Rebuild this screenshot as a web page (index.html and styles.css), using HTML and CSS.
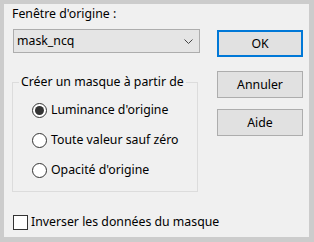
FILE: index.html
```html
<!DOCTYPE html>
<html lang="fr">
<head>
<meta charset="utf-8">
<link rel="stylesheet" href="styles.css">
</head>
<body>
<div class="dialog">
  <div class="main">
    <div class="left">
      <div class="label">Fenêtre d'origine :</div>
      <div class="select">
        <span>mask_ncq</span>
        <svg class="chev" width="9" height="5" viewBox="0 0 9 5"><polyline points="0.5,0.5 4.5,4.5 8.5,0.5" fill="none" stroke="#444" stroke-width="1"/></svg>
      </div>
      <fieldset class="group">
        <legend>Créer un masque à partir de</legend>
        <div class="radio-row"><span class="radio checked"></span><span>Luminance d'origine</span></div>
        <div class="radio-row"><span class="radio"></span><span>Toute valeur sauf zéro</span></div>
        <div class="radio-row"><span class="radio"></span><span>Opacité d'origine</span></div>
      </fieldset>
    </div>
    <div class="right">
      <div class="btn default">OK</div>
      <div class="btn cancel">Annuler</div>
      <div class="btn help">Aide</div>
    </div>
  </div>
  <div class="check-row"><span class="checkbox"></span><span>Inverser les données du masque</span></div>
</div>
</body>
</html>
```
FILE: styles.css
```css
html, body {
  margin: 0;
  padding: 0;
}
body {
  font-family: "Noto Sans", "Open Sans", sans-serif;
  font-size: 12.3px;
  line-height: 16px;
  color: #000;
}
.dialog {
  box-sizing: border-box;
  width: 314px;
  height: 242px;
  background: #f0f0f0;
  border-style: solid;
  border-color: #cccccc;
  border-width: 4px 5px 5px 4px;
  padding: 2px 6px 0 8px;
}
.main {
  display: flex;
  gap: 17px;
}
.left {
  width: 188px;
}
.label {
  height: 16px;
  white-space: nowrap;
}
.select {
  box-sizing: border-box;
  margin: 7px 0 0 1px;
  width: 187px;
  height: 24px;
  background: #e5e5e5;
  border: 1px solid #adadad;
  display: flex;
  align-items: center;
  justify-content: space-between;
  padding: 0 6px 0 3px;
}
.chev {
  display: block;
}
.group {
  box-sizing: border-box;
  width: 186px;
  height: 118px;
  margin: 21px 0 0 0;
  border: 1px solid #dcdcdc;
  padding: 5px 4px 6px 6px;
}
.group legend {
  padding: 0 2px;
  margin: 0;
  line-height: 16px;
  white-space: nowrap;
}
.radio-row {
  height: 30px;
  display: flex;
  align-items: center;
  gap: 4px;
  padding-left: 13px;
  white-space: nowrap;
}
.radio {
  box-sizing: border-box;
  width: 15px;
  height: 15px;
  border-radius: 50%;
  border: 1px solid #333;
  background: #fff;
  display: flex;
  align-items: center;
  justify-content: center;
  flex: none;
}
.radio.checked::after {
  content: "";
  width: 9px;
  height: 9px;
  border-radius: 50%;
  background: #333;
}
.right {
  display: flex;
  flex-direction: column;
  padding-top: 24px;
}
.btn {
  box-sizing: border-box;
  width: 86px;
  height: 27px;
  background: #e1e1e1;
  border: 1px solid #adadad;
  display: flex;
  align-items: center;
  justify-content: center;
}
.btn.default {
  border: 2px solid #0078d7;
}
.btn.cancel {
  margin-top: 14px;
}
.btn.help {
  margin-top: 11px;
}
.check-row {
  margin: 22px 0 0 1px;
  display: flex;
  align-items: center;
  gap: 3px;
  height: 16px;
  white-space: nowrap;
}
.checkbox {
  box-sizing: border-box;
  width: 15px;
  height: 15px;
  border: 1px solid #333;
  background: #fff;
  flex: none;
}
```
